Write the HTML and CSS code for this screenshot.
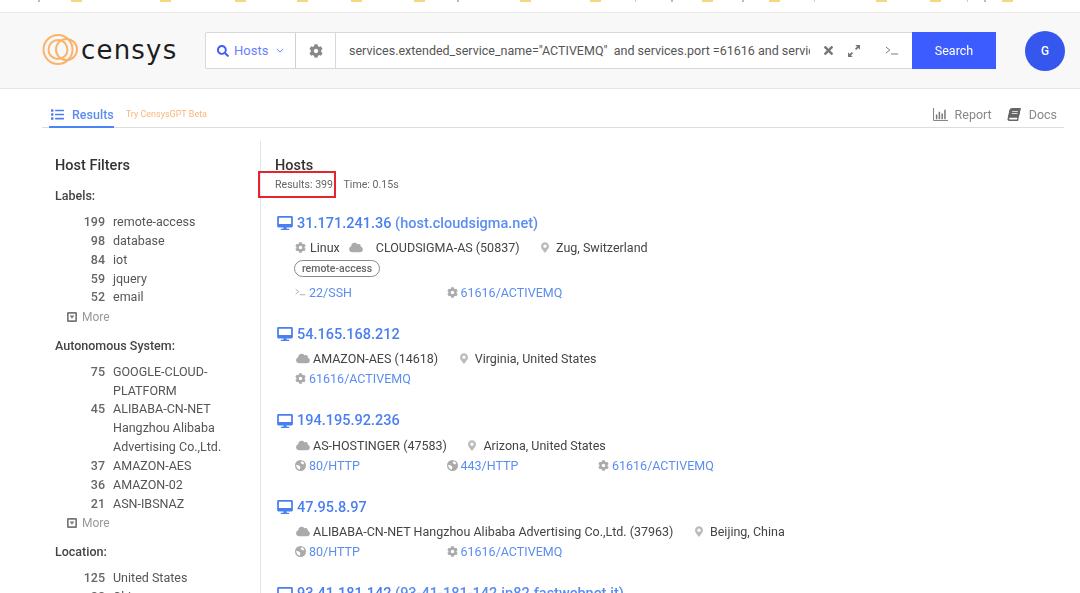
FILE: index.html
```html
<!DOCTYPE html>
<html lang="en">
<head>
<meta charset="utf-8">
<title>Censys Search</title>
<link rel="stylesheet" href="styles.css">
</head>
<body>
<svg class="defs" aria-hidden="true">
  <symbol id="i-cog" viewBox="0 0 512 512"><path d="M487.4 315.7l-42.6-24.6c4.3-23.2 4.3-47 0-70.2l42.6-24.6c4.9-2.8 7.1-8.6 5.5-14-11.1-35.6-30-67.8-54.7-94.6-3.8-4.1-10-5.1-14.8-2.3L380.8 110c-17.9-15.4-38.5-27.3-60.8-35.1V25.8c0-5.6-3.9-10.5-9.4-11.7-36.7-8.2-74.3-7.8-109.2 0-5.5 1.2-9.4 6.1-9.4 11.7V75c-22.2 7.9-42.8 19.8-60.8 35.1L88.7 85.5c-4.9-2.8-11-1.9-14.8 2.3-24.7 26.7-43.6 58.9-54.7 94.6-1.7 5.4.6 11.2 5.5 14L67.3 221c-4.3 23.2-4.3 47 0 70.2l-42.6 24.6c-4.9 2.8-7.1 8.6-5.5 14 11.1 35.6 30 67.8 54.7 94.6 3.8 4.1 10 5.1 14.8 2.3l42.6-24.6c17.9 15.4 38.5 27.3 60.8 35.1v49.2c0 5.6 3.9 10.5 9.4 11.7 36.7 8.2 74.3 7.8 109.2 0 5.5-1.2 9.4-6.1 9.4-11.7v-49.2c22.2-7.9 42.8-19.8 60.8-35.1l42.6 24.6c4.9 2.8 11 1.9 14.8-2.3 24.7-26.7 43.6-58.9 54.7-94.6 1.5-5.5-.7-11.3-5.6-14.1zM256 336c-44.1 0-80-35.9-80-80s35.9-80 80-80 80 35.9 80 80-35.9 80-80 80z"/></symbol>
  <symbol id="i-desktop" viewBox="0 0 576 512"><path d="M528 0H48C21.5 0 0 21.5 0 48v320c0 26.5 21.5 48 48 48h192l-16 48h-72c-13.3 0-24 10.7-24 24s10.7 24 24 24h272c13.3 0 24-10.7 24-24s-10.7-24-24-24h-72l-16-48h192c26.5 0 48-21.5 48-48V48c0-26.5-21.5-48-48-48zm-16 290H64V64h448v226z"/></symbol>
  <symbol id="i-search" viewBox="0 0 512 512"><path d="M505 442.7L405.3 343c-4.5-4.5-10.6-7-17-7H372c27.6-35.3 44-79.7 44-128C416 93.1 322.9 0 208 0S0 93.1 0 208s93.1 208 208 208c48.3 0 92.7-16.4 128-44v16.3c0 6.4 2.5 12.5 7 17l99.7 99.7c9.4 9.4 24.6 9.4 33.9 0l28.3-28.3c9.4-9.4 9.4-24.6.1-34zM208 336c-70.7 0-128-57.2-128-128 0-70.7 57.2-128 128-128 70.7 0 128 57.2 128 128 0 70.7-57.2 128-128 128z"/></symbol>
  <symbol id="i-cloud" viewBox="0 0 640 512"><path d="M537.6 226.6c4.1-10.7 6.4-22.4 6.4-34.6 0-53-43-96-96-96-19.7 0-38.1 6-53.3 16.2C367 64.2 315.3 32 256 32c-88.4 0-160 71.6-160 160 0 2.7.1 5.4.2 8.1C40.2 219.8 0 273.2 0 336c0 79.5 64.5 144 144 144h368c70.7 0 128-57.3 128-128 0-61.9-44-113.6-102.4-125.4z"/></symbol>
  <symbol id="i-pin" viewBox="0 0 384 512"><path d="M172.268 501.67C26.97 291.031 0 269.413 0 192 0 85.961 85.961 0 192 0s192 85.961 192 192c0 77.413-26.97 99.031-172.268 309.67-9.535 13.774-29.93 13.773-39.464 0zM192 272c44.183 0 80-35.817 80-80s-35.817-80-80-80-80 35.817-80 80 35.817 80 80 80z"/></symbol>
  <symbol id="i-list" viewBox="0 0 512 512"><path d="M80 368H16a16 16 0 0 0-16 16v64a16 16 0 0 0 16 16h64a16 16 0 0 0 16-16v-64a16 16 0 0 0-16-16zm0-320H16A16 16 0 0 0 0 64v64a16 16 0 0 0 16 16h64a16 16 0 0 0 16-16V64a16 16 0 0 0-16-16zm0 160H16a16 16 0 0 0-16 16v64a16 16 0 0 0 16 16h64a16 16 0 0 0 16-16v-64a16 16 0 0 0-16-16zm416 176H176a16 16 0 0 0-16 16v32a16 16 0 0 0 16 16h320a16 16 0 0 0 16-16v-32a16 16 0 0 0-16-16zm0-320H176a16 16 0 0 0-16 16v32a16 16 0 0 0 16 16h320a16 16 0 0 0 16-16V80a16 16 0 0 0-16-16zm0 160H176a16 16 0 0 0-16 16v32a16 16 0 0 0 16 16h320a16 16 0 0 0 16-16v-32a16 16 0 0 0-16-16z"/></symbol>
  <symbol id="i-times" viewBox="0 0 352 512"><path d="M242.72 256l100.07-100.07c12.28-12.28 12.28-32.19 0-44.48l-22.24-22.24c-12.28-12.28-32.19-12.28-44.48 0L176 189.28 75.93 89.21c-12.28-12.28-32.19-12.28-44.48 0L9.21 111.45c-12.28 12.28-12.28 32.19 0 44.48L109.28 256 9.21 356.07c-12.28 12.28-12.28 32.19 0 44.48l22.24 22.24c12.28 12.28 32.2 12.28 44.48 0L176 322.72l100.07 100.07c12.28 12.28 32.2 12.28 44.48 0l22.24-22.24c12.28-12.28 12.28-32.19 0-44.48L242.72 256z"/></symbol>
  <symbol id="i-book" viewBox="0 0 448 512"><path d="M448 360V24c0-13.3-10.7-24-24-24H96C43 0 0 43 0 96v320c0 53 43 96 96 96h328c13.3 0 24-10.7 24-24v-16c0-7.5-3.5-14.3-8.9-18.7-4.2-15.4-4.2-59.3 0-74.7 5.4-4.3 8.9-11.1 8.9-18.6zM128 134c0-3.3 2.7-6 6-6h212c3.3 0 6 2.7 6 6v20c0 3.3-2.7 6-6 6H134c-3.3 0-6-2.7-6-6v-20zm0 64c0-3.3 2.7-6 6-6h212c3.3 0 6 2.7 6 6v20c0 3.3-2.7 6-6 6H134c-3.3 0-6-2.7-6-6v-20zm253.4 250H96c-17.7 0-32-14.3-32-32 0-17.6 14.4-32 32-32h285.4c-1.9 17.1-1.9 46.9 0 64z"/></symbol>
  <symbol id="i-chart" viewBox="0 0 16 14"><path d="M.5 0v13.5H16" fill="none" stroke="currentColor"/><path d="M3 7h1.6v5H3zM6 4h1.6v8H6zM9 6h1.6v6H9zM12 2h1.6v10H12z"/></symbol>
  <symbol id="i-more" viewBox="0 0 12 12"><path fill-rule="evenodd" d="M1.5 0h9A1.5 1.5 0 0 1 12 1.5v9a1.5 1.5 0 0 1-1.5 1.5h-9A1.5 1.5 0 0 1 0 10.500v-9A1.500 1.500 0 0 1 1.500 0zM2 2v8h8V2z"/><path d="M3.200 4.200h5.600L6 8z"/></symbol>
  <symbol id="i-globe" viewBox="0 0 16 16"><path fill-rule="evenodd" d="M8 0a8 8 0 1 1 0 16A8 8 0 0 1 8 0zM9.500 1.800c1.800.4 3.200 1.500 4 3L12 6.500 9.500 5.500 8 3.500zM1.800 7 5 7.500l2.500 2 .3 2-1.200 2.700C3.800 13.500 1.800 10.500 1.800 7z"/></symbol>
  <symbol id="i-term" viewBox="0 0 16 10"><path d="M1 1l4.500 3.500L1 8M7 9h8" fill="none" stroke="currentColor" stroke-width="1.100"/></symbol>
  <symbol id="i-expand" viewBox="0 0 14 14"><path d="M8.500 0H14v5.500l-2-2-2.400 2.400-1.500-1.500L10.500 2zM5.500 14H0V8.500l2 2 2.400-2.400 1.500 1.500L3.500 12z"/></symbol>
  <symbol id="i-chev" viewBox="0 0 10 6"><path d="M1 1l4 4 4-4" fill="none" stroke="currentColor" stroke-width="1.200"/></symbol>
</svg>

<div class="bookmarks"></div>

<header class="topbar">
  <div class="brand">
    <svg class="brand-mark" viewBox="0 0 36 32"><g fill="none" stroke="#fbb36c" stroke-width="2"><circle cx="16" cy="15.500" r="14.500"/><circle cx="16" cy="15.500" r="9.500"/><circle cx="24.500" cy="15.500" r="10.500"/></g></svg>
    <span class="brand-name">censys</span>
  </div>
  <div class="search">
    <div class="search-type">
      <svg class="ico-search"><use href="#i-search"/></svg>
      <span>Hosts</span>
      <svg class="ico-chev"><use href="#i-chev"/></svg>
    </div>
    <div class="search-opts"><svg class="ico-opts"><use href="#i-cog"/></svg></div>
    <div class="search-input">
      <span class="query">services.extended_service_name="ACTIVEMQ"&nbsp; and services.port =61616 and services.software.product="ActiveMQ"</span>
      <svg class="ico-times"><use href="#i-times"/></svg>
      <svg class="ico-expand"><use href="#i-expand"/></svg>
      <svg class="ico-term"><use href="#i-term"/></svg>
    </div>
    <div class="search-btn">Search</div>
  </div>
  <div class="avatar">G</div>
</header>

<nav class="tabs">
  <a class="tab-active"><svg class="ico-list"><use href="#i-list"/></svg>Results</a>
  <a class="tab-gpt">Try CensysGPT Beta</a>
  <a class="tab-link tab-report"><svg class="ico-chart"><use href="#i-chart"/></svg>Report</a>
  <a class="tab-link tab-docs"><svg class="ico-book"><use href="#i-book"/></svg>Docs</a>
</nav>

<div class="content">
  <aside class="sidebar">
    <h2 class="side-title">Host Filters</h2>

    <h3 class="facet-title">Labels:</h3>
    <ul class="facet">
      <li><b>199</b><span>remote-access</span></li>
      <li><b>98</b><span>database</span></li>
      <li><b>84</b><span>iot</span></li>
      <li><b>59</b><span>jquery</span></li>
      <li><b>52</b><span>email</span></li>
    </ul>
    <div class="more"><svg class="ico-more"><use href="#i-more"/></svg>More</div>

    <h3 class="facet-title">Autonomous System:</h3>
    <ul class="facet">
      <li><b>75</b><span>GOOGLE-CLOUD-PLATFORM</span></li>
      <li><b>45</b><span>ALIBABA-CN-NET Hangzhou Alibaba Advertising Co.,Ltd.</span></li>
      <li><b>37</b><span>AMAZON-AES</span></li>
      <li><b>36</b><span>AMAZON-02</span></li>
      <li><b>21</b><span>ASN-IBSNAZ</span></li>
    </ul>
    <div class="more"><svg class="ico-more"><use href="#i-more"/></svg>More</div>

    <h3 class="facet-title">Location:</h3>
    <ul class="facet">
      <li><b>125</b><span>United States</span></li>
      <li><b>88</b><span>China</span></li>
    </ul>
  </aside>

  <main class="results">
    <h2 class="side-title">Hosts</h2>
    <div class="stats"><span>Results: 399</span><span>Time: 0.15s</span></div>
    <div class="callout"></div>

    <article class="host">
      <h3 class="host-title"><svg class="ico-desktop"><use href="#i-desktop"/></svg>31.171.241.36 <em>(host.cloudsigma.net)</em></h3>
      <div class="meta">
        <span class="m-os"><svg class="ico-m"><use href="#i-cog"/></svg>Linux</span>
        <span class="m-as"><svg class="ico-cloud"><use href="#i-cloud"/></svg>CLOUDSIGMA-AS (50837)</span>
        <span class="m-loc"><svg class="ico-pin"><use href="#i-pin"/></svg>Zug, Switzerland</span>
      </div>
      <div class="labels"><span class="badge">remote-access</span></div>
      <div class="ports">
        <a><svg class="ico-term2"><use href="#i-term"/></svg>22/SSH</a>
        <a><svg class="ico-m"><use href="#i-cog"/></svg>61616/ACTIVEMQ</a>
      </div>
    </article>

    <article class="host">
      <h3 class="host-title"><svg class="ico-desktop"><use href="#i-desktop"/></svg>54.165.168.212</h3>
      <div class="meta">
        <span class="m-as"><svg class="ico-cloud"><use href="#i-cloud"/></svg>AMAZON-AES (14618)</span>
        <span class="m-loc"><svg class="ico-pin"><use href="#i-pin"/></svg>Virginia, United States</span>
      </div>
      <div class="ports">
        <a><svg class="ico-m"><use href="#i-cog"/></svg>61616/ACTIVEMQ</a>
      </div>
    </article>

    <article class="host">
      <h3 class="host-title"><svg class="ico-desktop"><use href="#i-desktop"/></svg>194.195.92.236</h3>
      <div class="meta">
        <span class="m-as"><svg class="ico-cloud"><use href="#i-cloud"/></svg>AS-HOSTINGER (47583)</span>
        <span class="m-loc"><svg class="ico-pin"><use href="#i-pin"/></svg>Arizona, United States</span>
      </div>
      <div class="ports">
        <a><svg class="ico-m"><use href="#i-globe"/></svg>80/HTTP</a>
        <a><svg class="ico-m"><use href="#i-globe"/></svg>443/HTTP</a>
        <a><svg class="ico-m"><use href="#i-cog"/></svg>61616/ACTIVEMQ</a>
      </div>
    </article>

    <article class="host">
      <h3 class="host-title"><svg class="ico-desktop"><use href="#i-desktop"/></svg>47.95.8.97</h3>
      <div class="meta">
        <span class="m-as"><svg class="ico-cloud"><use href="#i-cloud"/></svg>ALIBABA-CN-NET Hangzhou Alibaba Advertising Co.,Ltd. (37963)</span>
        <span class="m-loc"><svg class="ico-pin"><use href="#i-pin"/></svg>Beijing, China</span>
      </div>
      <div class="ports">
        <a><svg class="ico-m"><use href="#i-globe"/></svg>80/HTTP</a>
        <a><svg class="ico-m"><use href="#i-cog"/></svg>61616/ACTIVEMQ</a>
      </div>
    </article>

    <article class="host">
      <h3 class="host-title"><svg class="ico-desktop"><use href="#i-desktop"/></svg>93.41.181.142 <em>(93-41-181-142.ip82.fastwebnet.it)</em></h3>
    </article>
  </main>
</div>
</body>
</html>
```

FILE: styles.css
```css
* { box-sizing: border-box; }
html, body { height: 593px; overflow: hidden; }
body { margin: 0; background: #fff; color: #444; font-family: Roboto, "Liberation Sans", sans-serif; font-size: 13px; filter: blur(0.4px); }
h2, h3, ul { margin: 0; padding: 0; font-weight: 400; }
ul { list-style: none; }
em { font-style: normal; font-weight: 500; color: #5b8def; }
svg { fill: currentColor; flex: none; }
.defs { position: absolute; width: 0; height: 0; }

.bookmarks {
  height: 12px;
  background-repeat: no-repeat;
  background-size: 11px 2px, 11px 2px, 11px 2px, 11px 2px, 11px 2px, 11px 2px, 11px 2px, 11px 2px, 11px 2px, 11px 2px, 11px 2px, 11px 2px, 11px 2px,
    2px 2px, 2px 2px, 1px 2px, 2px 2px, 2px 2px, 1px 2px, 1px 2px, 2px 2px;
  background-image:
    linear-gradient(#f5d87e,#f5d87e), linear-gradient(#f5d87e,#f5d87e), linear-gradient(#f5d87e,#f5d87e),
    linear-gradient(#f5d87e,#f5d87e), linear-gradient(#f5d87e,#f5d87e), linear-gradient(#f5d87e,#f5d87e),
    linear-gradient(#f5d87e,#f5d87e), linear-gradient(#f5d87e,#f5d87e), linear-gradient(#f5d87e,#f5d87e),
    linear-gradient(#f5d87e,#f5d87e), linear-gradient(#f5d87e,#f5d87e), linear-gradient(#f5d87e,#f5d87e),
    linear-gradient(#f5d87e,#f5d87e),
    linear-gradient(#bbb,#bbb), linear-gradient(#bbb,#bbb), linear-gradient(#ccc,#ccc), linear-gradient(#bbb,#bbb),
    linear-gradient(#bbb,#bbb), linear-gradient(#ccc,#ccc), linear-gradient(#ccc,#ccc), linear-gradient(#bbb,#bbb);
  background-position: 71px 0, 160px 0, 235px 0, 297px 0, 351px 0, 414px 0, 520px 0, 590px 0, 702px 0, 769px 0, 876px 0, 930px 0, 1002px 0,
    38px 0, 457px 0, 635px 0, 671px 0, 742px 0, 814px 0, 967px 0, 984px 0;
}

.topbar { height: 77px; display: flex; align-items: flex-start; background: #f8f8f8; border-top: 1px solid #eaeaea; border-bottom: 1px solid #e4e4ee; padding: 19px 0 0 42px; }
.brand { width: 163px; height: 36px; display: flex; align-items: center; }
.brand-mark { width: 36px; height: 32px; }
.brand-name { margin-left: 3px; font-family: "DejaVu Sans", sans-serif; font-size: 26px; line-height: 36px; color: #1d1d1f; letter-spacing: 1.200px; }

.search { width: 791px; height: 37px; display: flex; background: #fff; border: 1px solid #d8d8d8; border-radius: 2px; }
.search-type { width: 90px; display: flex; align-items: center; padding-left: 11px; color: #6a80ff; border-right: 1px solid #d0d0d0; }
.ico-search { width: 12px; height: 12px; color: #3d5cff; margin-right: 5px; }
.ico-chev { width: 8px; height: 5px; margin-left: 8px; color: #6a80ff; }
.search-opts { width: 40px; display: flex; align-items: center; justify-content: center; border-right: 1px solid #d8d8d8; color: #888; }
.ico-opts { width: 14px; height: 14px; }
.search-input { flex: 1; min-width: 0; display: flex; align-items: center; padding-left: 13px; color: #555; }
.query { width: 461px; white-space: nowrap; overflow: hidden; font-size: 12.500px; }
.ico-times { width: 9px; height: 13px; margin-left: 14px; color: #777; }
.ico-expand { width: 12px; height: 12px; margin-left: 15px; color: #777; }
.ico-term { width: 14px; height: 9px; margin-left: 25px; color: #777; }
.search-btn { width: 84px; flex: none; margin: -1px -1px -1px 0; background: #3d5cff; color: #fff; display: flex; align-items: center; justify-content: center; font-size: 12.500px; }
.avatar { width: 40px; height: 40px; margin: -1px 0 0 29px; border-radius: 50%; background: #3557ee; color: #fff; font-size: 12px; font-weight: 500; display: flex; align-items: center; justify-content: center; }

.tabs { height: 39px; margin: 0 16px 0 42px; display: flex; align-items: flex-end; border-bottom: 1px solid #ddd; }
.tab-active { height: 26px; margin-left: 7px; padding-left: 2px; display: flex; align-items: center; gap: 8px; color: #5b8def; font-size: 12.500px; font-weight: 500; border-bottom: 2px solid #4b84f5; margin-bottom: -1px; }
.ico-list { width: 13px; height: 13px; color: #4b7df0; }
.tab-gpt { height: 26px; margin-left: 12px; color: #f9b47a; font-size: 9px; line-height: 26px; flex: 1; }
.tab-link { height: 26px; display: flex; align-items: center; color: #888; font-size: 12.500px; gap: 7px; }
.tab-report { margin-right: 16px; }
.tab-docs { margin-right: 7px; gap: 9px; }
.ico-chart { width: 15px; height: 13px; color: #777; }
.ico-book { width: 12px; height: 13px; color: #666; transform: skewX(-12deg); }

.content { display: flex; height: 452px; margin-top: 13px; overflow: hidden; }
.sidebar { width: 219px; margin-left: 42px; padding-left: 13px; border-right: 1px solid #e2e2ee; }
.side-title { font-size: 14.500px; line-height: 20px; font-weight: 500; color: #333; margin-top: 15px; }
.facet-title { font-size: 12.500px; line-height: 19px; color: #444; font-weight: 500; margin-top: 10px; margin-bottom: 8px; }
.more + .facet-title { margin-top: 9px; }
.facet li { display: flex; line-height: 18.850px; font-size: 12.500px; color: #555; }
.facet b { width: 50px; flex: none; text-align: right; font-weight: 500; color: #666; margin-right: 8px; }
.facet span { width: 112px; }
.more { display: flex; align-items: center; height: 19.500px; margin-left: 12px; color: #999; font-size: 12px; gap: 5px; }
.ico-more { width: 10px; height: 10px; color: #777; }

.results { flex: 1; position: relative; padding-left: 14px; }
.stats { display: flex; gap: 10.500px; font-size: 10.600px; line-height: 14px; color: #666; margin-top: 2px; }
.callout { position: absolute; left: -3px; top: 30px; width: 78px; height: 27px; border: 2px solid #e3262e; }

.host { margin-bottom: 21px; }
.stats + .callout + .host { margin-top: 20px; }
.host-title { display: flex; align-items: center; height: 22px; margin-left: 2px; font-size: 14.500px; font-weight: 500; color: #4a7ff0; white-space: pre; }
.ico-desktop { width: 16px; height: 14px; margin-right: 4px; color: #4a7ff0; }
.meta { display: flex; margin: 3.500px 0 0 20px; height: 20px; align-items: center; font-size: 12.500px; color: #444; white-space: nowrap; }
.meta span { display: flex; align-items: center; }
.m-os { margin-right: 8px; }
.m-as { margin-right: 21.500px; }
.ico-m { width: 11px; height: 11px; color: #aaa; margin-right: 3px; }
.m-os .ico-m { margin-right: 4px; }
.ico-cloud { width: 14px; height: 11px; color: #aaa; margin: 0 3px 0 1px; }
.m-os + .m-as .ico-cloud { margin-right: 13px; }
.ico-pin { width: 8px; height: 11px; color: #bbb; margin: 0 7px 0 0; }
.labels { margin: 2.500px 0 5px 19px; height: 17px; }
.badge { display: inline-block; height: 17px; padding: 0 7px; border: 1px solid #888; border-radius: 9px; font-size: 10.500px; line-height: 15px; font-weight: 500; color: #666; }
.ports { display: grid; grid-template-columns: repeat(3, 151.500px); margin: 0 0 0 20px; height: 20px; align-items: center; width: max-content; font-size: 12.500px; color: #5b8def; }
.ports a { display: flex; align-items: center; }
.ico-term2 { width: 11px; height: 8px; color: #999; margin-right: 3px; }
```
